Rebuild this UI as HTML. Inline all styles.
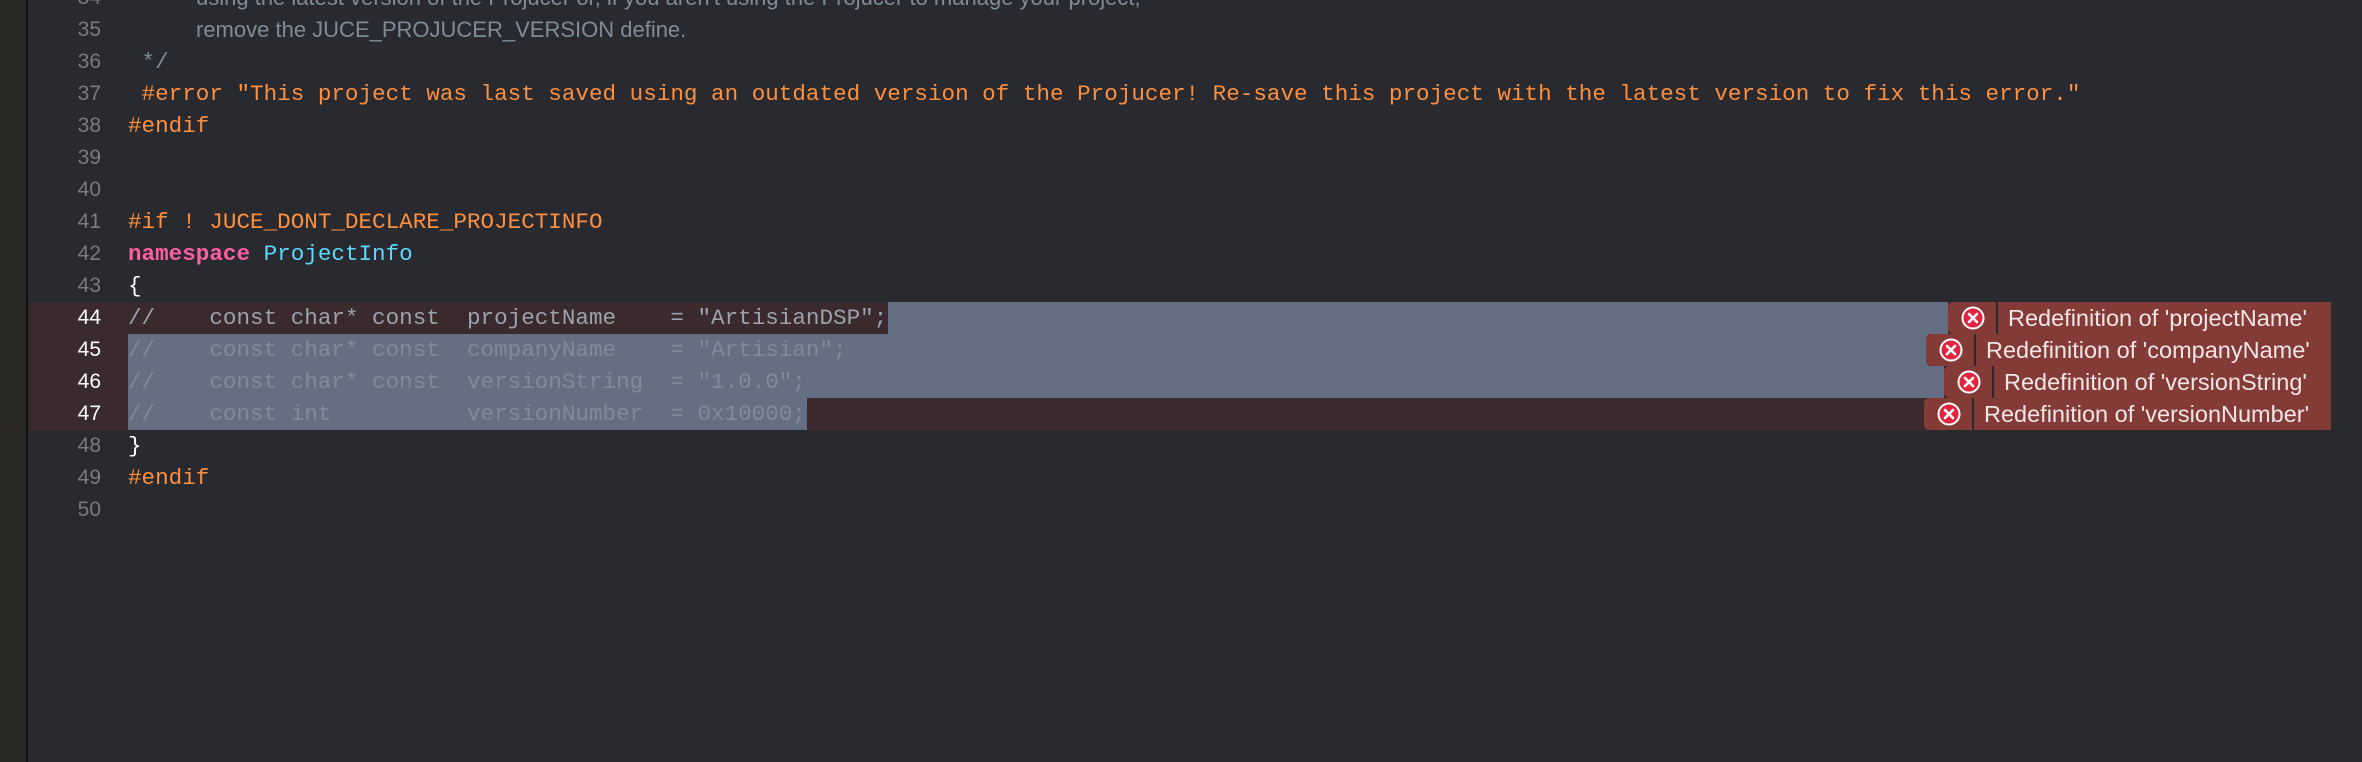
<!DOCTYPE html>
<html><head><meta charset="utf-8"><style>
*{margin:0;padding:0;box-sizing:border-box}
body{width:2362px;height:762px;background:#292a30;position:relative;overflow:hidden;font-family:"Liberation Mono",monospace}
.side{position:absolute;left:0;top:0;width:28px;height:762px;background:#2b2926;border-right:2px solid #111}
.row{position:absolute;left:30px;height:32px}
.ln{position:absolute;left:30px;width:71px;text-align:right;font-size:21px;line-height:32px;color:#7a7b80;font-family:"Liberation Sans",sans-serif}
.ln.cur{color:#fff}
.code{position:absolute;left:128px;font-size:22.6px;line-height:32px;white-space:pre;color:#fff}
.cm{position:absolute;left:196px;font-size:22px;line-height:32px;white-space:pre;color:#7f8c98;font-family:"Liberation Sans",sans-serif}
.pp{color:#fd8f3f}.kw{color:#fc5fa3;font-weight:bold}.ty{color:#5dd8ff}.c{color:#7f8c98}
.sel{position:absolute;height:32px;background:#646f83}
.badge{position:absolute;height:32px;right:31px;background:#843a37;border-radius:5px 0 0 5px;font-family:"Liberation Sans",sans-serif;font-size:23.5px;line-height:32px;color:#f0e6e6}
.badge svg{position:absolute;left:13px;top:4px}
.badge .sep{position:absolute;left:48px;top:0;width:2px;height:32px;background:#2a2a2e}
.badge span{position:absolute;left:60px;top:0;white-space:pre}
</style></head><body>
<div class="side"></div>

<div class="row" style="top:302px;width:1920px;background:#3b2a2d"></div>
<div class="row" style="top:334px;width:1900px;background:#3b2a2d"></div>
<div class="row" style="top:366px;width:1915px;background:#3b2a2d"></div>
<div class="row" style="top:398px;width:1900px;background:#3b2a2d"></div>
<div class="sel" style="top:302px;left:888px;width:1060px"></div>
<div class="sel" style="top:334px;left:128px;width:1800px"></div>
<div class="sel" style="top:366px;left:128px;width:1816px"></div>
<div class="sel" style="top:398px;left:128px;width:679px"></div>

<div class="ln" style="top:-18px">34</div><div class="cm" style="top:-18px">using the latest version of the Projucer or, if you aren't using the Projucer to manage your project,</div>
<div class="ln" style="top:14px">35</div><div class="cm" style="top:14px">remove the JUCE_PROJUCER_VERSION define.</div>
<div class="ln" style="top:46px">36</div><div class="code c" style="top:46px"> */</div>
<div class="ln" style="top:78px">37</div><div class="code pp" style="top:78px"> #error "This project was last saved using an outdated version of the Projucer! Re-save this project with the latest version to fix this error."</div>
<div class="ln" style="top:110px">38</div><div class="code pp" style="top:110px">#endif</div>
<div class="ln" style="top:142px">39</div>
<div class="ln" style="top:174px">40</div>
<div class="ln" style="top:206px">41</div><div class="code pp" style="top:206px">#if ! JUCE_DONT_DECLARE_PROJECTINFO</div>
<div class="ln" style="top:238px">42</div><div class="code" style="top:238px"><span class="kw">namespace</span> <span class="ty">ProjectInfo</span></div>
<div class="ln" style="top:270px">43</div><div class="code" style="top:270px">{</div>
<div class="ln cur" style="top:302px">44</div><div class="code c" style="top:302px;color:#9aa3ad">//    const char* const  projectName    = "ArtisianDSP";</div>
<div class="ln cur" style="top:334px">45</div><div class="code c" style="top:334px">//    const char* const  companyName    = "Artisian";</div>
<div class="ln cur" style="top:366px">46</div><div class="code c" style="top:366px">//    const char* const  versionString  = "1.0.0";</div>
<div class="ln cur" style="top:398px">47</div><div class="code c" style="top:398px">//    const int          versionNumber  = 0x10000;</div>
<div class="ln" style="top:430px">48</div><div class="code" style="top:430px">}</div>
<div class="ln" style="top:462px">49</div><div class="code pp" style="top:462px">#endif</div>
<div class="ln" style="top:494px">50</div>

<div class="badge" style="top:302px;left:1948px"><svg width="24" height="24" viewBox="0 0 24 24"><circle cx="12" cy="12" r="10.5" fill="#e0263f" stroke="#fff" stroke-width="2"/><path d="M8 8L16 16M16 8L8 16" stroke="#fff" stroke-width="2.6" stroke-linecap="round"/></svg><div class="sep"></div><span>Redefinition of 'projectName'</span></div>
<div class="badge" style="top:334px;left:1926px"><svg width="24" height="24" viewBox="0 0 24 24"><circle cx="12" cy="12" r="10.5" fill="#e0263f" stroke="#fff" stroke-width="2"/><path d="M8 8L16 16M16 8L8 16" stroke="#fff" stroke-width="2.6" stroke-linecap="round"/></svg><div class="sep"></div><span>Redefinition of 'companyName'</span></div>
<div class="badge" style="top:366px;left:1944px"><svg width="24" height="24" viewBox="0 0 24 24"><circle cx="12" cy="12" r="10.5" fill="#e0263f" stroke="#fff" stroke-width="2"/><path d="M8 8L16 16M16 8L8 16" stroke="#fff" stroke-width="2.6" stroke-linecap="round"/></svg><div class="sep"></div><span>Redefinition of 'versionString'</span></div>
<div class="badge" style="top:398px;left:1924px"><svg width="24" height="24" viewBox="0 0 24 24"><circle cx="12" cy="12" r="10.5" fill="#e0263f" stroke="#fff" stroke-width="2"/><path d="M8 8L16 16M16 8L8 16" stroke="#fff" stroke-width="2.6" stroke-linecap="round"/></svg><div class="sep"></div><span>Redefinition of 'versionNumber'</span></div>
</body></html>
